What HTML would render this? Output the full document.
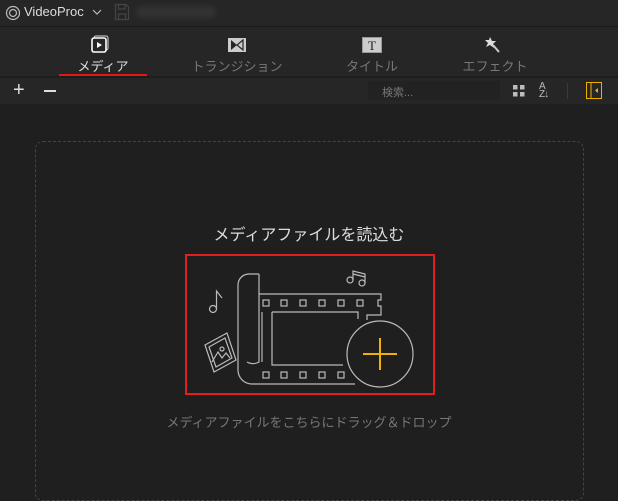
<!DOCTYPE html>
<html><head><meta charset="utf-8"><style>
*{margin:0;padding:0;box-sizing:border-box}
body{width:618px;height:478px;overflow:hidden;background:#1f1f1f;font-family:"Liberation Sans","Noto Sans CJK JP",sans-serif;position:relative;color:#ccc}
.top{position:absolute;left:0;top:0;width:618px;height:27px;background:#262626;border-bottom:1px solid #1a1a1a}
.tabs{position:absolute;left:0;top:27px;width:618px;height:50px;background:#262626;border-bottom:1px solid #1c1c1c}
.tool{position:absolute;left:0;top:78px;width:618px;height:26px;background:#262626}
.tab{position:absolute;top:56px;font-size:12px;color:#777;text-align:center;width:120px}
.dash{position:absolute;left:35px;top:141px;width:549px;height:360px;border:1px dashed #444;border-radius:8px}
</style></head><body>
<div class="top"></div>
<svg style="position:absolute;left:5px;top:5px" width="16" height="16" viewBox="0 0 16 16"><circle cx="8" cy="8" r="6.5" fill="none" stroke="#bbb" stroke-width="1.2"/><circle cx="8" cy="8" r="3.5" fill="none" stroke="#bbb" stroke-width="1.2"/></svg>
<div style="position:absolute;left:24px;top:4px;font-size:13px;color:#ddd">VideoProc</div>
<svg style="position:absolute;left:92px;top:8px" width="10" height="8"><path d="M1 2L5 6L9 2" fill="none" stroke="#bbb" stroke-width="1.2"/></svg>
<svg style="position:absolute;left:114px;top:3px" width="16" height="18"><path d="M1.5 1.5H12L14.5 4V16.5H1.5Z M4.5 1.5V6H11V1.5 M4.5 16.5V11H11.5V16.5" fill="none" stroke="#444" stroke-width="1.2"/></svg>
<div style="position:absolute;left:136px;top:6px;width:80px;height:12px;background:#333;border-radius:6px;filter:blur(3px)"></div>
<div class="tabs"></div>
<svg style="position:absolute;left:90px;top:35px" width="22" height="20"><rect x="4" y="1" width="14" height="14" rx="2" fill="none" stroke="#ddd" stroke-width="1"/><rect x="2" y="3" width="14" height="14" rx="2" fill="#262626" stroke="#fff" stroke-width="1.6"/><path d="M7 7L12 10L7 13Z" fill="#fff"/></svg>
<svg style="position:absolute;left:227px;top:37px" width="20" height="16"><rect x="1" y="1" width="18" height="14" fill="#ccc"/><path d="M4 3L10 8L4 13Z" fill="#262626"/><path d="M16 3L10 8L16 13Z" fill="none" stroke="#262626" stroke-width="1.2"/></svg>
<svg style="position:absolute;left:362px;top:37px" width="20" height="16"><rect x="0.5" y="0.5" width="19" height="15" fill="#ccc" stroke="#999"/><text x="10" y="13" font-size="13" text-anchor="middle" font-family="Liberation Serif" fill="#222">T</text></svg>
<svg style="position:absolute;left:484px;top:35px" width="20" height="20"><path d="M6 2L8 6L12 6L9 9L10 13L6 10L2 12L4 8L1 5L5 5Z" fill="#ddd"/><path d="M9 10L15 17" stroke="#ccc" stroke-width="2"/></svg>
<div class="tab" style="left:43px;color:#ddd;font-size:13px">メディア</div>
<div class="tab" style="left:177px;font-size:13px">トランジション</div>
<div class="tab" style="left:312px;font-size:13px">タイトル</div>
<div class="tab" style="left:435px;font-size:13px">エフェクト</div>
<div style="position:absolute;left:59px;top:74px;width:88px;height:2px;background:#e01818"></div>
<div class="tool"></div>
<div style="position:absolute;left:13px;top:80px;font-size:20px;color:#ddd;line-height:20px">+</div>
<div style="position:absolute;left:44px;top:90px;width:12px;height:2px;background:#ddd"></div>
<div style="position:absolute;left:368px;top:81px;width:132px;height:19px;background:#222"></div>
<div style="position:absolute;left:382px;top:84px;font-size:11px;color:#777">検索...</div>
<svg style="position:absolute;left:513px;top:85px" width="12" height="12"><rect x="0" y="0" width="4.5" height="4.5" fill="#bbb"/><rect x="7" y="0" width="4.5" height="4.5" fill="#bbb"/><rect x="0" y="7" width="4.5" height="4.5" fill="#bbb"/><rect x="7" y="7" width="4.5" height="4.5" fill="#bbb"/></svg>
<div style="position:absolute;left:539px;top:83px;font-size:10px;color:#bbb;line-height:8px;letter-spacing:-1px">A<br>Z↓</div>
<div style="position:absolute;left:567px;top:83px;width:1px;height:16px;background:#3a3a3a"></div>
<svg style="position:absolute;left:586px;top:82px" width="16" height="17"><rect x="0.5" y="0.5" width="15" height="16" fill="none" stroke="#f0b000"/><path d="M5 1V16" stroke="#f0b000"/><path d="M12 6L9 8.5L12 11Z" fill="#f0b000"/></svg>
<div class="dash"></div>
<div style="position:absolute;left:0;top:221px;width:618px;text-align:center;font-size:16px;color:#ddd">メディアファイルを読込む</div>
<div style="position:absolute;left:185px;top:254px;width:250px;height:141px;border:2px solid #e02020"></div>
<svg style="position:absolute;left:0;top:0" width="618" height="478">
<g fill="none" stroke="#bbb" stroke-width="1.2">
<path d="M259 274H249A11 11 0 0 0 238 285V370A14 14 0 0 0 252 384H355"/>
<path d="M259 274V362A12 12 0 0 1 247 362"/>
<path d="M259 294H381V300H378V306H381V315H367V320"/>
<path d="M262 312V362"/>
<path d="M272 312H358V319 M272 312V365H343"/>
<g><rect x="263" y="300" width="6" height="6"/><rect x="281" y="300" width="6" height="6"/><rect x="300" y="300" width="6" height="6"/><rect x="319" y="300" width="6" height="6"/><rect x="338" y="300" width="6" height="6"/><rect x="357" y="300" width="6" height="6"/></g>
<g><rect x="263" y="372" width="6" height="6"/><rect x="281" y="372" width="6" height="6"/><rect x="300" y="372" width="6" height="6"/><rect x="319" y="372" width="6" height="6"/><rect x="338" y="372" width="6" height="6"/></g>
<circle cx="380" cy="354" r="33"/>
<circle cx="213" cy="309" r="3.5"/><path d="M216.5 309V291L222 298"/>
<circle cx="350" cy="280" r="3"/><circle cx="362" cy="283" r="3"/><path d="M353 280V271L365 274V283 M353 274L365 277"/>
<path d="M205 345L227 333L236 360L214 372Z"/><path d="M209 347L225 338L232 358L216 367Z"/><circle cx="222" cy="349" r="2"/><path d="M212 362L218 352L222 358L226 353L230 358"/>
</g>
<path d="M380 338V370M363 354H397" stroke="#f2b000" stroke-width="2"/>
</svg>
<div style="position:absolute;left:0;top:412px;width:618px;text-align:center;font-size:13px;color:#777">メディアファイルをこちらにドラッグ＆ドロップ</div>
</body></html>
